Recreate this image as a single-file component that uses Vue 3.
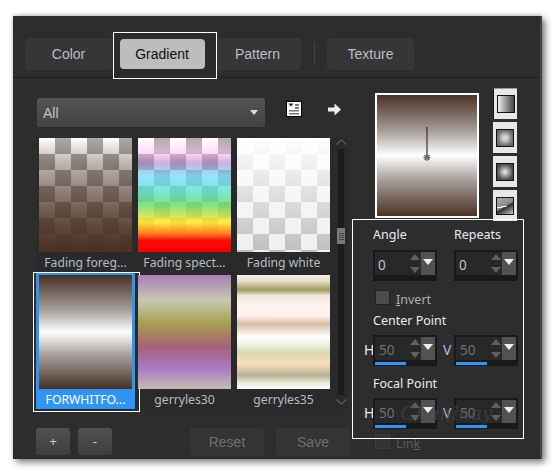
<script setup>
const tabs = [
  { label: 'Color' },
  { label: 'Gradient', active: true },
  { label: 'Pattern' },
  { sep: true },
  { label: 'Texture' }
]
const thumbs = [
  { name: 'Fading foreg...', cls: 'g-fore' },
  { name: 'Fading spect...', cls: 'g-spect' },
  { name: 'Fading white', cls: 'g-white' },
  { name: 'FORWHITFO...', cls: 'g-forwhit', selected: true },
  { name: 'gerryles30', cls: 'g-g30' },
  { name: 'gerryles35', cls: 'g-g35' }
]
const styles = ['s-linear', 's-square', 's-radial', 's-corner']
</script>

<template>
  <div class="page">
    <div class="window">
      <div class="tabs">
        <template v-for="t in tabs" :key="t.label || 'sep'">
          <span v-if="t.sep" class="tab-sep"></span>
          <button v-else class="tab" :class="{ active: t.active }"><span>{{ t.label }}</span></button>
        </template>
      </div>

      <div class="body">
        <div class="left">
          <div class="toolbar">
            <div class="select"><span>All</span><i class="caret"></i></div>
            <svg class="list-icon" width="16" height="16" viewBox="0 0 16 16">
              <rect x=".5" y=".5" width="15" height="15" fill="#fff" stroke="#000" />
              <path d="M2.500 2.500h5L5 5.500z" fill="#222" />
              <path d="M9 3h4v2H9zM9 6h4v2H9zM3 9h10v1.500H3zM3 12h10v1.500H3z" fill="#777" />
            </svg>
            <svg class="arrow-icon" width="13" height="13" viewBox="0 0 13 13">
              <path d="M0 4.500h6.500V.5L13 6.500l-6.500 6v-4H0z" fill="#eee" />
            </svg>
          </div>

          <div class="gallery-row">
            <div class="gallery">
              <div v-for="t in thumbs" :key="t.name" class="cell" :class="{ selected: t.selected }">
                <div class="thumb" :class="t.cls"></div>
                <div class="name">{{ t.name }}</div>
              </div>
            </div>
            <div class="scroll">
              <svg width="11" height="6" viewBox="0 0 11 6"><path d="M.5 5.500l5-4.500 5 4.500" fill="none" stroke="#5a5a5a" stroke-width="1.300" /></svg>
              <div class="track"><div class="grip"><i></i><i></i><i></i><i></i></div></div>
              <svg width="11" height="6" viewBox="0 0 11 6"><path d="M.5 .5l5 4.500 5-4.500" fill="none" stroke="#5a5a5a" stroke-width="1.300" /></svg>
            </div>
          </div>

          <div class="actions">
            <button class="small">+</button>
            <button class="small">-</button>
            <span class="spacer"></span>
            <button class="wide">Reset</button>
            <button class="wide">Save</button>
          </div>
        </div>

        <div class="right">
          <div class="top">
            <div class="preview">
              <svg class="marker" width="12" height="38" viewBox="0 0 12 38">
                <path d="M6 0v30" stroke="#333" stroke-width="1.200" />
                <path d="M6 27v7M2.500 30.500h7M3.500 28l5 5M8.500 28l-5 5" stroke="#6e6e6e" stroke-width="1.400" />
              </svg>
            </div>
            <div class="styles">
              <div v-for="(s, i) in styles" :key="s" class="style-btn" :class="{ on: i === 0 }">
                <i :class="s"></i>
              </div>
            </div>
          </div>

          <div class="settings">
            <div class="pair">
              <div class="field">
                <label>Angle</label>
                <div class="spin"><b>0</b><span class="updown"></span><span class="drop"></span></div>
              </div>
              <div class="field">
                <label>Repeats</label>
                <div class="spin"><b>0</b><span class="updown"></span><span class="drop"></span></div>
              </div>
            </div>
            <div class="check"><i></i><span><u>I</u>nvert</span></div>

            <label class="sect">Center Point</label>
            <div class="pair axis">
              <div class="axis-item"><em>H</em><div class="spin off"><b>50</b><span class="updown"></span><span class="drop"></span><s></s></div></div>
              <div class="axis-item"><em>V</em><div class="spin off"><b>50</b><span class="updown"></span><span class="drop"></span><s></s></div></div>
            </div>

            <label class="sect focal">Focal Point</label>
            <div class="pair axis">
              <div class="axis-item"><em>H</em><div class="spin off"><b>50</b><span class="updown"></span><span class="drop"></span><s></s></div></div>
              <div class="axis-item"><em>V</em><div class="spin off"><b>50</b><span class="updown"></span><span class="drop"></span><s></s></div></div>
            </div>
            <div class="check dim"><i></i><span>Lin<u>k</u></span></div>
            <span class="mark">Chaninay</span>
          </div>
        </div>
      </div>
    </div>
  </div>
</template>

<style>
html, body { margin: 0; background: #fff; }
</style>

<style scoped>
.page {
  width: 556px;
  height: 472px;
  overflow: hidden;
  padding: 16px 0 0 13px;
  box-sizing: border-box;
  background: #fff;
}
.window {
  width: 529px;
  height: 443px;
  box-sizing: border-box;
  background: #2d2d2d;
  border-right: 2px solid #454545;
  box-shadow: 3px 3px 7px rgba(0, 0, 0, .55), 0 -2px 3px rgba(0, 0, 0, .12);
  font-family: "Liberation Sans", Arial, sans-serif;
  display: flex;
  flex-direction: column;
}
button { font-family: inherit; border: 0; padding: 0; }

.tabs {
  height: 62px;
  box-sizing: border-box;
  padding: 22px 0 0 12px;
  border-bottom: 1px solid #1e1e1e;
  display: flex;
  align-items: flex-start;
}
.tab {
  width: 87px;
  height: 32px;
  margin-right: 20px;
  border-radius: 4px;
  background: #363636;
  color: #b7bfc7;
  font-size: 14px;
}
.tab:first-child { margin-right: 8px; }
.tab.active {
  position: relative;
  z-index: 1;
  width: 104px;
  height: 47px;
  margin: -6px -3px 0 -7px;
  box-sizing: border-box;
  padding: 5.500px 0 8.500px 5.500px;
  border: 1.500px solid #fff;
  border-radius: 0;
  background: #2b2b2b;
  color: #111;
  display: block;
}
.tab.active span {
  display: block;
  width: 85px;
  height: 30px;
  line-height: 30px;
  border-radius: 4px;
  background: #bdbdbd;
}
.tab-sep {
  width: 1px;
  height: 23px;
  margin: 4px 12px 0 -7px;
  background: #444;
}

.body { flex: 1; display: flex; min-height: 0; }
.left { width: 360px; padding: 20px 0 0 24px; box-sizing: border-box; }
.toolbar { display: flex; align-items: flex-start; }
.select {
  width: 228px;
  height: 29px;
  box-sizing: border-box;
  padding: 0 7px 0 6px;
  border-radius: 3px;
  background: linear-gradient(#555, #424242);
  color: #c0c8d0;
  font-size: 14px;
  display: flex;
  align-items: center;
  justify-content: space-between;
}
.caret {
  width: 0;
  height: 0;
  border: 4px solid transparent;
  border-top: 5px solid #ddd;
  border-bottom: 0;
}
.list-icon { margin: 3px 0 0 21px; }
.arrow-icon { margin: 5px 0 0 26px; }

.gallery-row {
  margin: 11px 0 0 0;
  height: 272px;
  display: flex;
  background: #2a2a2a;
  width: 311px;
}
.gallery {
  width: 297px;
  padding-left: 2px;
  display: grid;
  grid-template-columns: repeat(3, 93px);
  column-gap: 6px;
  grid-auto-rows: 134px;
  row-gap: 3px;
}
.cell { text-align: center; position: relative; }
.thumb { height: 114px; }
.name {
  height: 20px;
  font: 12.200px/22px "Noto Sans", sans-serif;
  color: #b4bec8;
  white-space: nowrap;
}
.cell.selected {
  background: #2f95f5;
  margin: -2px -3px 0;
  padding: 2px 3px 0;
}
.cell.selected .name { color: #fff; }
.cell.selected::after {
  content: "";
  position: absolute;
  left: -3px;
  top: -1px;
  width: 105px;
  height: 138px;
  border: 1.500px solid #fff;
}

.g-fore {
  background:
    linear-gradient(to bottom, rgba(74, 49, 34, 0) 0%, rgba(74, 49, 34, .35) 21%, rgba(74, 49, 34, .55) 40%, rgba(74, 49, 34, .8) 65%, rgba(74, 49, 34, .89) 79%, rgba(74, 49, 34, .97) 93%, #4a3122 100%),
    repeating-conic-gradient(#aaa 0 25%, #fff 0 50%) 0 0 / 32px 32px;
}
.g-spect {
  background:
    linear-gradient(to bottom, rgba(255, 215, 250, .05) 0%, rgba(255, 190, 245, .5) 12%, rgba(165, 110, 195, .55) 22%, rgba(110, 215, 255, .72) 33%, rgba(85, 225, 205, .78) 46%, rgba(100, 220, 110, .82) 58%, rgba(200, 225, 70, .85) 68%, rgba(255, 235, 40, .9) 74%, #ff7c20 84%, #f60a08 90%, #f00 100%),
    repeating-conic-gradient(#aaa 0 25%, #fff 0 50%) 0 0 / 32px 32px;
}
.g-white {
  background:
    linear-gradient(to bottom, #fff 0%, rgba(255, 255, 255, .05) 100%),
    repeating-conic-gradient(#bcbcbc 0 25%, #eee 0 50%) 0 0 / 32px 32px;
}
.g-forwhit {
  background: linear-gradient(#463024 0%, #a49c99 30%, #fff 50%, #a49c99 71%, #463024 100%);
}
.g-g30 {
  background: linear-gradient(#a87fb8 0%, #c8c8b0 22%, #a8a050 42%, #a86078 63%, #a87ac8 82%, #c4bdb0 100%);
}
.g-g35 {
  background: linear-gradient(#fdeee6 0%, #e2dac5 6%, #a09858 13%, #ece5d8 18%, #fff5f0 28%, #fdf0ea 36%, #d8bca4 43%, #fff 54%, #eef0dc 62%, #d6d8ae 68%, #f8dcbc 78%, #b4b494 88%, #e6e6d6 94%, #fff 100%);
}

.scroll {
  width: 14px;
  margin-left: 1px;
  padding-top: 1px;
  display: flex;
  flex-direction: column;
  align-items: center;
}
.track {
  width: 6px;
  height: 246px;
  margin: 4px 0;
  background: #1c1c1c;
  position: relative;
}
.grip {
  position: absolute;
  left: -1px;
  top: 79px;
  width: 8px;
  height: 16px;
  background: #7a7a7a;
  display: flex;
  flex-direction: column;
  justify-content: center;
  align-items: center;
  gap: 1px;
}
.grip i { width: 5px; height: 1px; background: #444; }

.actions {
  margin: 18px 0 0 -1px;
  display: flex;
  align-items: flex-start;
  width: 314px;
}
.small {
  width: 34px;
  height: 27px;
  margin-right: 8px;
  border-radius: 3px;
  background: linear-gradient(#515151, #3e3e3e);
  color: #ccc;
  font-size: 13px;
}
.spacer { width: 70px; }
.wide {
  width: 74px;
  height: 28px;
  margin-right: 12px;
  border-radius: 3px;
  background: #343434;
  color: #707070;
  font-size: 14px;
}
.wide:last-child { margin-right: 0; }

.right { position: relative; width: 167px; padding: 15px 0 0 0; box-sizing: border-box; }
.top { display: flex; align-items: flex-start; }
.preview {
  position: relative;
  width: 104px;
  height: 125px;
  margin-left: 2px;
  box-sizing: border-box;
  border: 2px solid #fff;
  background: linear-gradient(#4a3225 0%, #a89f9b 30%, #fff 50%, #a89f9b 70%, #4a3225 100%);
}
.marker { position: absolute; left: 44px; top: 32px; }
.styles {
  margin: -5px 0 0 14px;
  height: 125px;
  display: flex;
  flex-direction: column;
  gap: 3px;
}
.style-btn {
  width: 24px;
  height: 31px;
  flex: none;
  box-sizing: border-box;
  background: #e8e8e8;
  display: flex;
  align-items: center;
  justify-content: center;
}
.style-btn.on { border-top: 1px solid #999; border-left: 1px solid #111; }
.style-btn i {
  width: 18px;
  height: 18px;
  box-sizing: border-box;
  border: 1.500px solid #111;
  display: block;
}
.s-linear { background: linear-gradient(to right, #eee, #444); }
.s-square { background: #e4e4e4; box-shadow: inset 0 0 5px 3px #5c5c5c; }
.s-radial { background: radial-gradient(closest-side, #eee, #4c4c4c); }
.s-corner {
  background:
    linear-gradient(172deg, transparent 0 52%, #fff 53% 58%, transparent 60%) 0 0 / 60% 100% no-repeat,
    linear-gradient(150deg, #aaa 0%, #888 50%, #2a2a2a 56%, #666 72%, #ccc 100%);
}

.settings {
  position: relative;
  margin: 8px 0 0 -9px;
  color: #e6eef4;
  font: 12.500px "Noto Sans", sans-serif;
}
.settings::before {
  content: "";
  position: absolute;
  left: -12px;
  top: -7px;
  width: 170px;
  height: 218px;
  border: 1.500px solid #fff;
  z-index: 2;
  pointer-events: none;
}
.pair { display: flex; gap: 17px; padding-left: 9px; }
.field label { display: block; height: 24px; line-height: 17px; }
.spin {
  position: relative;
  width: 64px;
  height: 31px;
  box-sizing: border-box;
  border: 2px solid #191919;
  background: linear-gradient(#282828 0 23px, #191919 23px);
  color: #bcc6d0;
}
.spin b {
  position: absolute;
  left: 3px;
  top: 4px;
  font-weight: 400;
  font-size: 13.500px;
}
.updown {
  position: absolute;
  left: 35px;
  top: 5px;
  width: 10px;
  height: 16px;
}
.updown::before, .updown::after {
  content: "";
  position: absolute;
  left: 0;
  border: 5px solid transparent;
}
.updown::before { top: -3px; border-top: 0; border-bottom: 6px solid #606060; }
.updown::after { top: 10px; border-bottom: 0; border-top: 6px solid #606060; }
.drop {
  position: absolute;
  right: 0;
  top: 0;
  width: 14px;
  height: 23px;
  background: #525252;
}
.drop::after {
  content: "";
  position: absolute;
  left: 2px;
  top: 7px;
  border: 5px solid transparent;
  border-top: 6px solid #eee;
  border-bottom: 0;
}
.off b { color: #6f6f6f; left: 4px; }
.off s {
  position: absolute;
  left: 0;
  top: 25px;
  width: 31px;
  height: 3px;
  background: #2f95f5;
}
.check { display: flex; align-items: center; padding-left: 11px; height: 15px; margin-top: 9px; color: #a8b0b8; }
.check i {
  width: 15px;
  height: 15px;
  box-sizing: border-box;
  border: 1px solid #222;
  background: #4c4c4c;
  margin-right: 6px;
}
.check span { padding-top: 3px; }
.check.dim { color: #5c5c5c; margin-top: 5px; }
.check.dim i { background: #333; border-color: #3c3c3c; }
.sect { display: block; padding-left: 9px; height: 17px; line-height: 17px; margin-top: 7px; }
.focal { margin-top: 9px; }
.axis { padding-left: 0; gap: 6px; margin-top: 6px; }
.axis-item { display: flex; align-items: flex-start; }
.axis-item em { width: 9px; font-style: normal; line-height: 29px; font-size: 14px; }
.axis-item + .axis-item em { width: 11px; color: #9cc8ec; }
.mark {
  position: absolute;
  left: 36px;
  top: 174px;
  font: italic 22px "Liberation Serif", serif;
  color: #484848;
  opacity: .6;
  letter-spacing: 1px;
  pointer-events: none;
}
</style>
